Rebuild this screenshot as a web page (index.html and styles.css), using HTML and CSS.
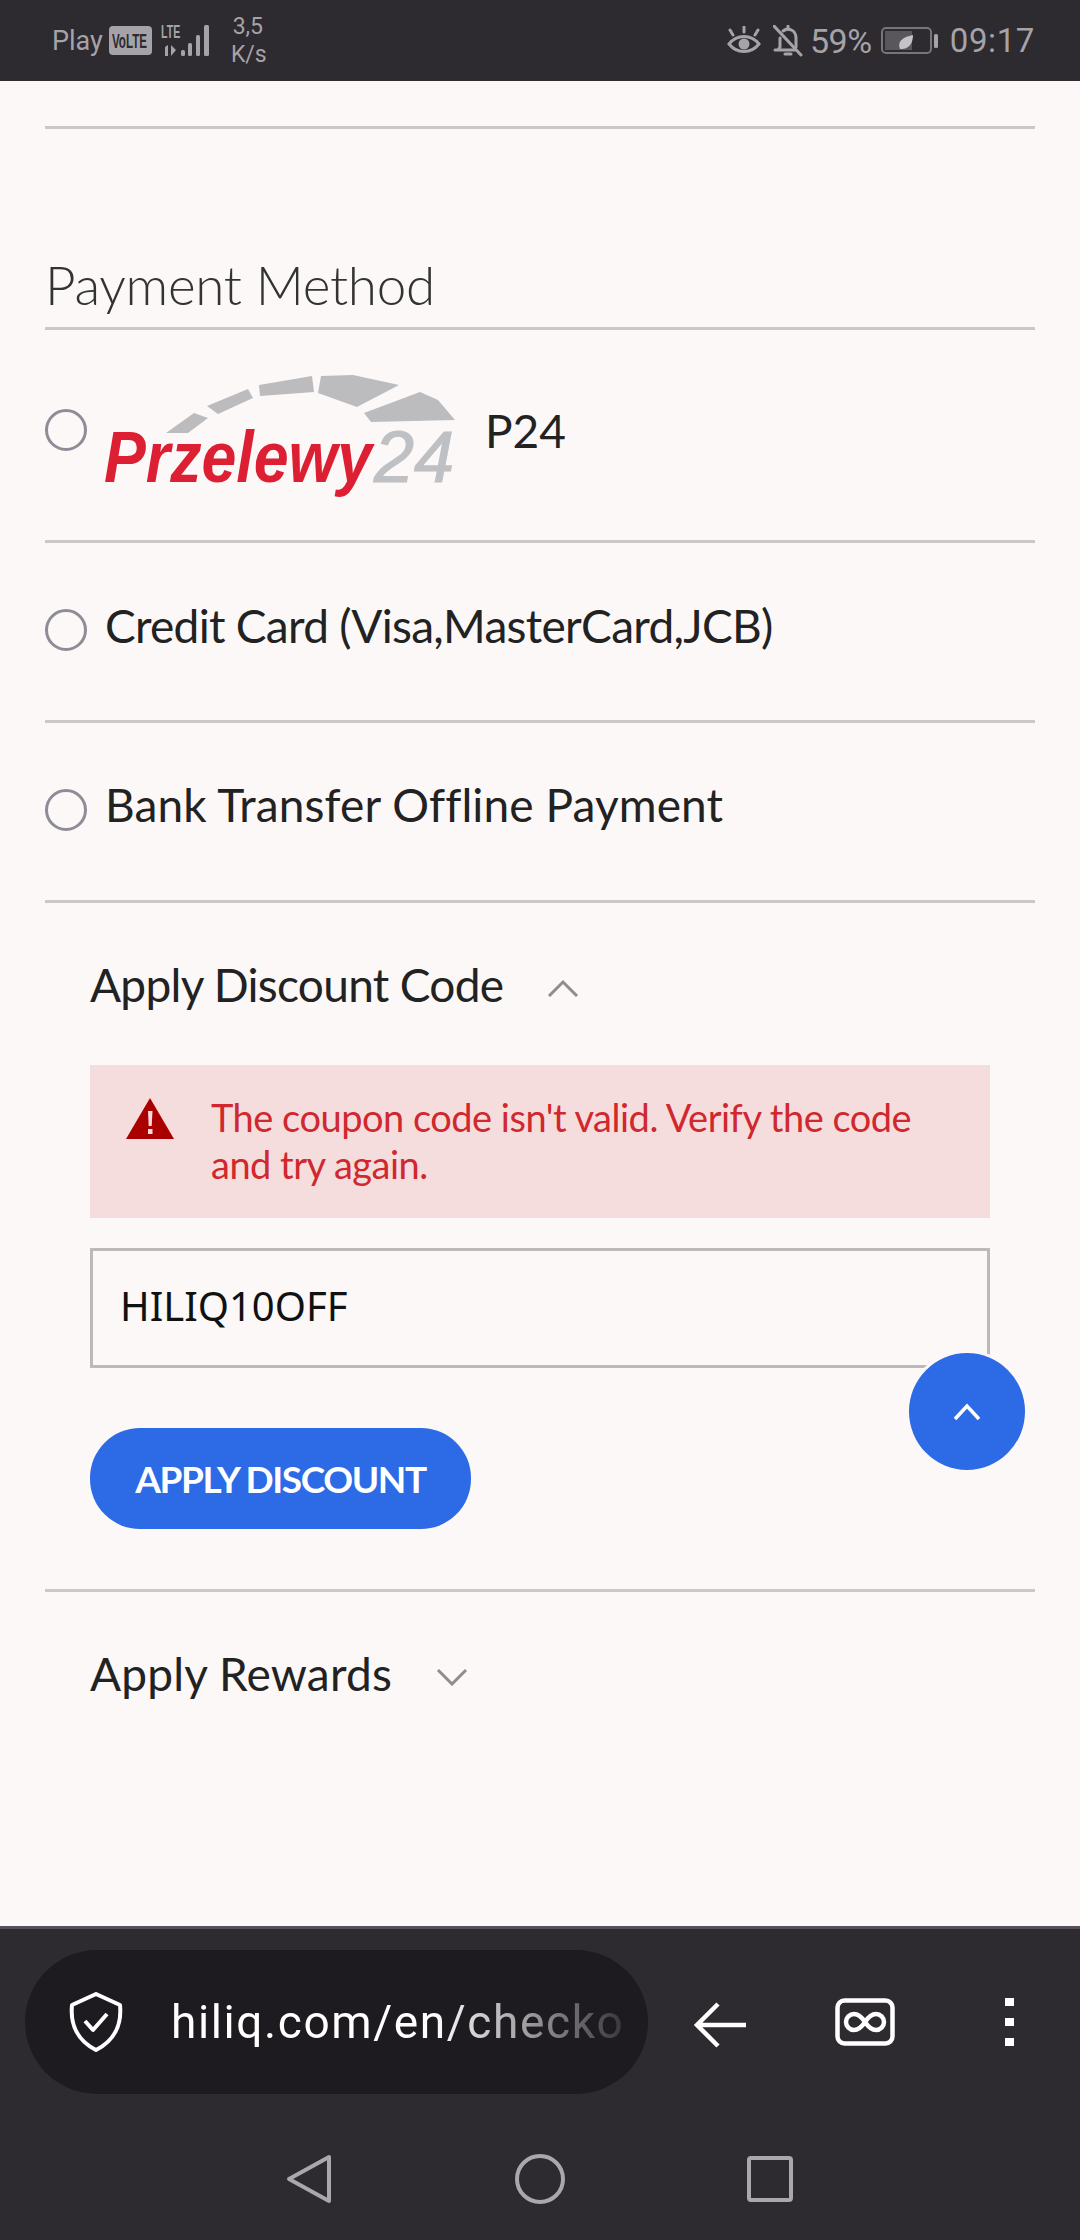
FILE: index.html
```html
<!DOCTYPE html>
<html lang="en">
<head>
<meta charset="utf-8">
<title>Checkout</title>
<link rel="stylesheet" href="styles.css">
</head>
<body>
<header class="status">
  <div class="status-left">
    <span class="carrier">Play</span>
    <svg class="volte" width="43" height="29" viewBox="0 0 43 29">
      <rect width="43" height="29" rx="4" fill="#a5a3a8"/>
      <text transform="translate(3 22) scale(.58 1)" class="volte-text">VoLTE</text>
    </svg>
    <svg class="signal" width="53" height="32" viewBox="0 0 53 32">
      <text transform="translate(0 13) scale(.59 1)" class="lte">LTE</text>
      <path d="M4 22l3-2v11H4zM10 20l5 5-5 6z" fill="#a5a3a8"/>
      <rect x="20" y="25" width="4" height="6" rx="1.5" fill="#a5a3a8"/>
      <rect x="27" y="18" width="4" height="13" rx="1.5" fill="#a5a3a8"/>
      <rect x="35" y="10" width="4" height="21" rx="1.5" fill="#a5a3a8"/>
      <rect x="43" y="0" width="5" height="31" rx="1.5" fill="#a5a3a8"/>
    </svg>
    <span class="speed">3,5<br>K/s</span>
  </div>
  <div class="status-right">
    <svg width="34" height="30" viewBox="0 0 34 30" fill="none" stroke="#a5a3a8" stroke-width="3" stroke-linecap="round">
      <path d="M2 18c8-10 22-10 30 0-8 10-22 10-30 0z"/>
      <circle cx="17" cy="18" r="5.500" fill="#a5a3a8" stroke="none"/>
      <path d="M17 1v5M3 4l3 5M31 4l-3 5"/>
    </svg>
    <svg class="bell" width="30" height="32" viewBox="0 0 30 32" fill="none" stroke="#a5a3a8" stroke-width="3" stroke-linecap="round">
      <path d="M2 25h20M5 25l2-3V13M10 6c5-4 13-1 13 7v9"/>
      <path d="M1 1l27 29"/>
      <path d="M12 29h6M15 1v3"/>
    </svg>
    <span class="pct">59%</span>
    <svg class="batt" width="58" height="28" viewBox="0 0 58 28">
      <rect x="1" y="1" width="49" height="25" rx="4" fill="none" stroke="#77757a" stroke-width="2"/>
      <rect x="4" y="4" width="27" height="19" fill="#59565c"/>
      <rect x="53" y="7" width="4" height="14" rx="1.500" fill="#a5a3a8"/>
      <path d="M19 22c-3-7 2-12 13-14 0 9-5 15-13 14z" fill="#c5c3c6"/>
    </svg>
    <span class="time">09:17</span>
  </div>
</header>

<main class="page">
  <div class="rule-top"></div>
  <h2 class="section-title">Payment Method</h2>

  <div class="method method-logo">
    <span class="radio radio-logo"></span>
    <svg class="logo" width="355" height="130" viewBox="105 370 355 130">
      <g fill="#bcbbbd">
        <polygon points="166,433 194,413 208,418 188,433"/>
        <polygon points="207,406 248,389 253,398 218,414"/>
        <polygon points="259,385 312,376 314,392 260,396"/>
        <polygon points="321,376 353,375 399,385 357,407 318,393"/>
        <polygon points="364,413 420,392 438,400 455,420 371,422"/>
      </g>
      <text transform="translate(104 482) scale(.87 1)" class="logo-red">Przelewy</text>
      <text x="374" y="482" class="logo-grey">24</text>
    </svg>
    <span class="method-text method-text-logo">P24</span>
  </div>

  <div class="method">
    <span class="radio"></span>
    <span class="method-text tight">Credit Card (Visa,MasterCard,JCB)</span>
  </div>

  <div class="method">
    <span class="radio"></span>
    <span class="method-text open">Bank Transfer Offline Payment</span>
  </div>

  <section class="discount">
    <div class="toggle">
      <span class="toggle-label tight">Apply Discount Code</span>
      <svg class="chevron" width="32" height="18" viewBox="0 0 32 18" fill="none" stroke="#8f8d8d" stroke-width="3"><path d="M2 17L16 3l14 14"/></svg>
    </div>
    <div class="alert">
      <svg class="alert-icon" width="48" height="42" viewBox="0 0 48 42">
        <path d="M24 0l24 41H0z" fill="#ab0000"/>
        <path d="M22 13h4.500l-.8 15h-3z M22 31h4.500v5H22z" fill="#f6dddd"/>
      </svg>
      <p class="alert-text">The coupon code isn't valid. Verify the code and try again.</p>
    </div>
    <div class="code-input">HILIQ10OFF</div>
    <button class="apply" type="button">APPLY DISCOUNT</button>
  </section>

  <section class="rewards">
    <span class="toggle-label rewards-label">Apply Rewards</span>
    <svg class="chevron" width="32" height="18" viewBox="0 0 32 18" fill="none" stroke="#8f8d8d" stroke-width="3"><path d="M2 2l14 14L30 2"/></svg>
  </section>

  <button class="fab" type="button" aria-label="Back to top">
    <svg width="28" height="18" viewBox="0 0 28 18" fill="none" stroke="#fff" stroke-width="3.500"><path d="M2 16L14 3l12 13"/></svg>
  </button>
</main>

<footer class="chrome">
  <div class="toolbar">
    <div class="urlbar">
      <svg class="shield" width="56" height="60" viewBox="0 0 56 60" fill="none" stroke="#fff" stroke-width="4" stroke-linejoin="round">
        <path d="M28 2l24 11c2 20-6 36-24 45C10 49 2 33 4 13z"/>
        <path d="M17 29l8 9 14-16" stroke-width="4"/>
      </svg>
      <span class="url">hiliq.com/en/checko</span>
    </div>
    <svg class="back" width="54" height="46" viewBox="0 0 54 46" fill="none" stroke="#fff" stroke-width="4.500"><path d="M25 2L4 23l21 21M4 23h49"/></svg>
    <svg class="inf" width="60" height="48" viewBox="0 0 60 48" fill="none" stroke="#fff" stroke-width="4.500"><rect x="2.500" y="2.500" width="55" height="43" rx="7"/><path d="M30 24c-4-6-7-8-11-8a8 8 0 0 0 0 16c4 0 7-2 11-8s7-8 11-8a8 8 0 0 1 0 16c-4 0-7-2-11-8z"/></svg>
    <div class="dots"><i></i><i></i><i></i></div>
  </div>
  <nav class="navbar">
    <svg width="60" height="50" viewBox="0 0 60 50" fill="none" stroke="#a9a8aa" stroke-width="4" stroke-linejoin="round"><path d="M49 3v44L9 25z"/></svg>
    <svg width="60" height="50" viewBox="0 0 60 50" fill="none" stroke="#a9a8aa" stroke-width="4"><circle cx="30" cy="25" r="23"/></svg>
    <svg width="60" height="50" viewBox="0 0 60 50" fill="none" stroke="#a9a8aa" stroke-width="4"><rect x="9" y="4" width="42" height="42" rx="2"/></svg>
  </nav>
</footer>
</body>
</html>
```

FILE: styles.css
```css
* { box-sizing: border-box; }
html, body { margin: 0; padding: 0; }
body {
  width: 1080px;
  height: 2240px;
  overflow: hidden;
  display: flex;
  flex-direction: column;
  background: #fbf8f7;
  font-family: "Lato", sans-serif;
  color: #222;
}

.status {
  height: 81px;
  flex: none;
  background: #2d2a30;
  color: #a5a3a8;
  font-family: "Roboto", sans-serif;
  display: flex;
  justify-content: space-between;
  align-items: center;
  padding: 0 45px 0 52px;
}
.status-left, .status-right { display: flex; align-items: center; }
.carrier { font-size: 27px; margin-right: 6px; }
.volte-text { font: bold 20px "Liberation Sans", sans-serif; fill: #2d2a30; }
.signal { margin-left: 9px; }
.lte { font: bold 18px "Liberation Sans", sans-serif; fill: #a5a3a8; }
.speed { font-size: 23px; line-height: 28px; margin: 1px 0 0 17px; width: 34px; text-align: center; }
.bell { margin-left: 12px; }
.pct { font-size: 34px; margin-left: 7px; letter-spacing: -0.4px; }
.batt { margin-left: 9px; }
.time { font-size: 33px; margin-left: 11px; letter-spacing: 0.6px; }

.page { flex: 1; position: relative; padding: 0 45px; }
.rule-top { margin-top: 45px; border-top: 3px solid #cbc7c4; }
.section-title {
  margin: 0;
  padding: 126px 0 12px;
  border-bottom: 3px solid #cbc7c4;
  font: 300 53px/60px "Lato", sans-serif;
  letter-spacing: -0.3px;
  color: #333;
}

.method {
  height: 180px;
  display: flex;
  align-items: flex-start;
  border-bottom: 3px solid #cbc7c4;
}
.method-logo { height: 213px; }
.radio {
  flex: none;
  width: 42px; height: 42px;
  margin: 66px 18px 0 0;
  border: 3px solid #8e8d97;
  border-radius: 50%;
}
.radio-logo { margin-top: 79px; }
.logo { flex: none; margin-top: 40px; filter: blur(0.6px); }
.logo-red { font: italic bold 72px "Liberation Sans", sans-serif; fill: #dd1f34; }
.logo-grey { font: italic 72px "Liberation Sans", sans-serif; fill: #bfc0c3; stroke: #bfc0c3; stroke-width: 1.2px; }
.method-text { font-size: 46px; line-height: 60px; margin-top: 53px; color: #222; }
.method-text-logo { margin: 71px 0 0 25px; }
.tight { letter-spacing: -0.7px; }
.open { margin-top: 52px; letter-spacing: 0.1px; }
.rewards-label { letter-spacing: 0.2px; }

.discount {
  padding: 52px 45px 60px;
  border-bottom: 3px solid #cbc7c4;
}
.toggle { display: flex; align-items: center; }
.toggle-label { font-size: 46px; line-height: 60px; color: #222; margin-right: 44px; }
.chevron { margin-top: 5px; }
.alert {
  margin-top: 50px;
  height: 153px;
  background: #f6dddd;
  display: flex;
  align-items: flex-start;
  padding: 33px 50px 0 36px;
}
.alert-icon { flex: none; margin-right: 37px; }
.alert-text { margin: -4px 0 0; font-size: 38px; line-height: 47px; letter-spacing: -0.5px; color: #d0282e; }
.code-input {
  margin-top: 30px;
  height: 120px;
  border: 3px solid #bdb9b6;
  padding: 0 27px;
  font: 40px/110px "Noto Sans", sans-serif;
  color: #111;
}
.apply {
  display: block;
  margin-top: 60px;
  width: 381px; height: 101px;
  border: 0;
  border-radius: 50px;
  background: #2d6be6;
  color: #fff;
  font: bold 37px "Lato", sans-serif;
  letter-spacing: -1.4px;
  padding: 0;
}
.rewards { padding: 52px 45px 0; display: flex; align-items: center; }

.fab {
  position: absolute;
  left: 909px; top: 1272px;
  width: 116px; height: 117px;
  border: 0;
  border-radius: 50%;
  background: #2d6be6;
  box-shadow: 0 0 0 3px #fbf8f7;
  display: flex;
  align-items: center;
  justify-content: center;
  padding: 0;
}

.chrome {
  flex: none;
  height: 314px;
  background: #2d2a30;
  border-top: 3px solid #55525a;
  padding-top: 21px;
}
.toolbar { display: flex; align-items: center; height: 144px; }
.urlbar {
  width: 623px; height: 144px;
  margin-left: 25px;
  background: #1e1b20;
  border-radius: 72px;
  display: flex;
  align-items: center;
  padding-left: 43px;
}
.shield { flex: none; }
.url {
  margin-left: 47px;
  white-space: nowrap;
  font: 46px "Roboto", sans-serif;
  letter-spacing: 1.6px;
  color: #fff;
  -webkit-mask-image: linear-gradient(to right, #000 58%, rgba(0,0,0,.12) 100%);
  mask-image: linear-gradient(to right, #000 58%, rgba(0,0,0,.12) 100%);
}
.back { margin: 6px 0 0 45px; flex: none; }
.inf { margin-left: 88px; flex: none; }
.dots { margin-left: 110px; display: flex; flex-direction: column; gap: 12px; }
.dots i { display: block; width: 9px; height: 8px; background: #fff; }
.navbar {
  display: flex;
  justify-content: center;
  gap: 170px;
  padding-top: 60px;
}
```
